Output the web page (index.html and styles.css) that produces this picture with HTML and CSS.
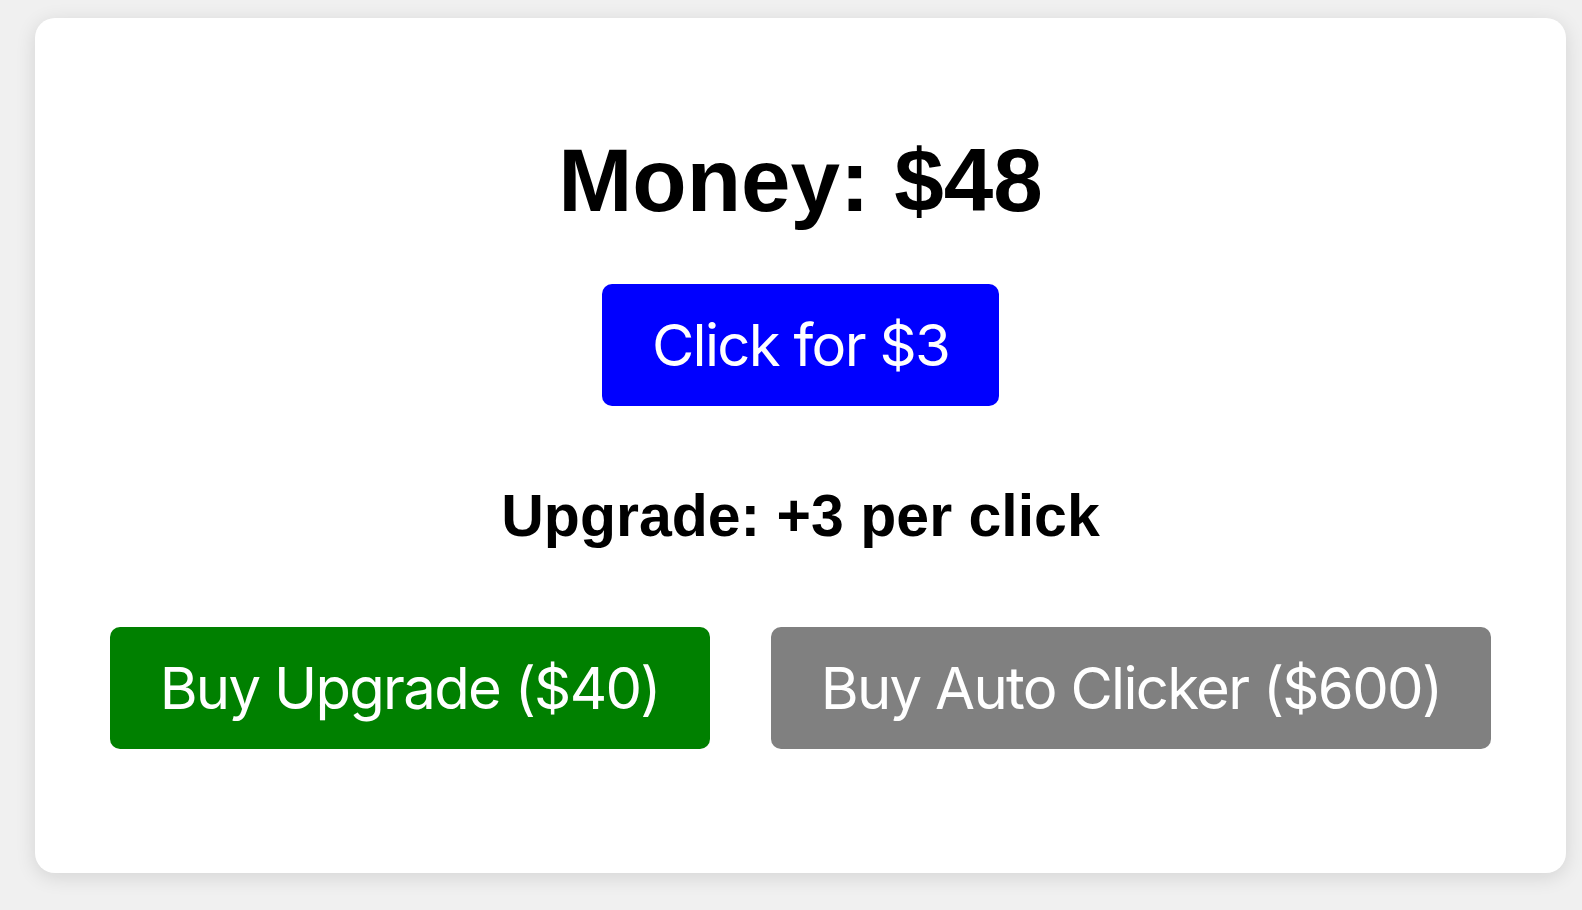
FILE: index.html
```html
<!DOCTYPE html>
<html>
<head>
<meta charset="utf-8">
<link rel="stylesheet" href="styles.css">
</head>
<body>
<div class="card">
  <h1 class="money">Money: $48</h1>
  <button class="btn btn-click">Click for $3</button>
  <p class="upgrade">Upgrade: +3 per click</p>
  <div class="row">
    <button class="btn btn-upgrade">Buy Upgrade ($40)</button>
    <button class="btn btn-auto">Buy Auto Clicker ($600)</button>
  </div>
</div>
</body>
</html>
```

FILE: styles.css
```css
html, body {
  height: 100%;
}
body {
  margin: 0;
  padding: 18px 16px 0 35px;
  box-sizing: border-box;
  background: #f0f0f0;
  font-family: "Liberation Sans", Arial, sans-serif;
  overflow: hidden;
}
.card {
  height: 855px;
  background: #ffffff;
  border-radius: 20px;
  box-shadow: 0 4px 20px rgba(0, 0, 0, 0.12);
  display: flex;
  flex-direction: column;
  align-items: center;
  padding-top: 111px;
  box-sizing: border-box;
}
.money {
  margin: 0;
  font-size: 89px;
  font-weight: 700;
  line-height: normal;
  color: #000;
}
.btn {
  font-family: Inter, "Noto Sans", sans-serif;
  font-size: 58px;
  font-weight: 400;
  letter-spacing: -1.7px;
  color: #fff;
  border: none;
  border-radius: 10px;
  height: 122px;
  padding: 0 50px;
  cursor: pointer;
}
.btn-click {
  margin-top: 52px;
  background: #0000ff;
}
.upgrade {
  margin: 76px 0 0 0;
  font-size: 59px;
  font-weight: 700;
  line-height: normal;
  color: #000;
}
.row {
  margin-top: 77px;
  display: flex;
  gap: 61px;
  justify-content: center;
}
.btn-upgrade {
  background: #008000;
}
.btn-auto {
  background: #808080;
}
```
